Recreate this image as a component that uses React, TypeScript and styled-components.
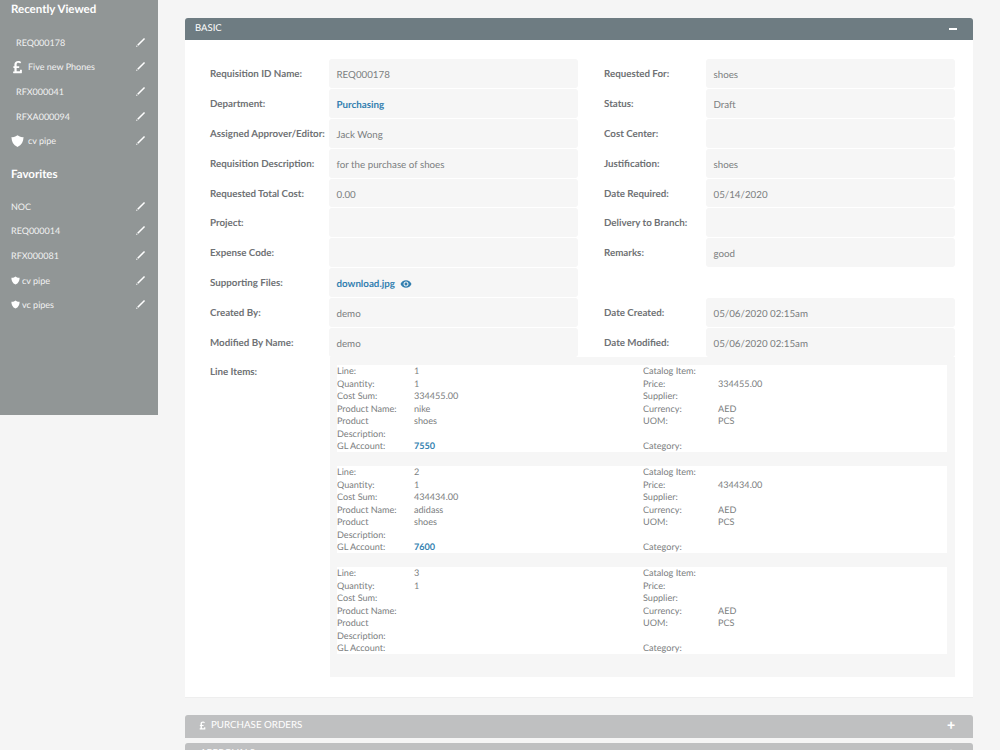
import React from 'react';
import styled, { createGlobalStyle } from 'styled-components';
import { FaPoundSign } from 'react-icons/fa';
import { MdRemoveRedEye } from 'react-icons/md';

const GlobalStyle = createGlobalStyle`
    html, body {
        margin: 0;
        height: 750px;
        overflow: hidden;
        background: #f5f5f5;
        font-family: Lato, "Liberation Sans", sans-serif;
        color: #75787b;
        text-rendering: geometricPrecision;
    }
`;

const Page = styled.div`
    display: flex;
    align-items: flex-start;
    height: 750px;
    overflow: hidden;
`;

const Sidebar = styled.aside`
    width: 158px;
    height: 415px;
    flex-shrink: 0;
    box-sizing: border-box;
    padding-top: 2px;
    background: #919696;
    color: #fff;
`;

const SideTitle = styled.h3<{ $spaced?: boolean }>`
    margin: ${({ $spaced }) => ($spaced ? '14px' : '0')} 0 ${({ $spaced }) => ($spaced ? '11px' : '12px')} 11px;
    height: 16px;
    font-size: 11.5px;
    line-height: 16px;
    font-weight: 700;
`;

const SideItem = styled.div<{ $indent?: number }>`
    display: flex;
    align-items: center;
    height: 24.6px;
    padding-left: ${({ $indent }) => $indent ?? 11}px;
    padding-right: 12px;
    font-size: 9px;
    color: #f1f2f2;
`;

const SideIcon = styled.span<{ $gap: number; $width: number }>`
    display: inline-flex;
    justify-content: center;
    width: ${({ $width }) => $width}px;
    margin-right: ${({ $gap }) => $gap}px;
    color: #fff;
`;

const SideLabel = styled.span`
    flex: 1;
`;

const Main = styled.main`
    width: 788px;
    margin-left: 27px;
    padding-top: 18px;
`;

const SectionHeader = styled.div<{ $active?: boolean }>`
    display: flex;
    align-items: center;
    box-sizing: border-box;
    height: ${({ $active }) => ($active ? '22px' : '23px')};
    padding: ${({ $active }) => ($active ? '0 16px 1px 10px' : '0 18px 3px 15px')};
    border-radius: 3px 3px 0 0;
    background: ${({ $active }) => ($active ? '#6e7c82' : '#bfc0c1')};
    color: #fff;
    font-size: ${({ $active }) => ($active ? '9.5px' : '9.75px')};
`;

const SectionTitle = styled.span`
    flex: 1;
    display: flex;
    align-items: center;
    gap: 4px;
`;

const SectionIcon = styled.span`
    display: inline-flex;
    margin-left: -2px;
`;

const Plus = styled.span`
    font-size: 14px;
    font-weight: 900;
    line-height: 1;
`;

const Minus = styled.span`
    width: 8px;
    height: 2px;
    background: #fff;
`;

const ClosedHeaders = styled.div`
    display: flex;
    flex-direction: column;
    gap: 5px;
`;

const Panel = styled.section`
    box-sizing: border-box;
    height: 658px;
    margin-bottom: 17px;
    padding: 19px 18px 0 25px;
    background: #fff;
    border-bottom: 1px solid #eeeeee;
`;

const FormGrid = styled.div`
    display: grid;
    grid-template-columns: 119px 249px 128px 249px;
    grid-auto-rows: 28.9px;
    row-gap: 1px;
`;

const Label = styled.div`
    padding-top: 9px;
    font-size: 9.75px;
    font-weight: 700;
    white-space: nowrap;
    color: #6f7275;
`;

const RightLabel = styled(Label)`
    padding-left: 26px;
`;

const Value = styled.div`
    display: flex;
    align-items: center;
    gap: 5px;
    padding: 3px 0 0 7.5px;
    border-radius: 3px;
    background: #f6f6f6;
    font-size: 9.75px;
    color: #7b7e80;
`;

const Blank = styled.div``;

const Link = styled.span`
    color: #337fb0;
    font-weight: 700;
`;

const LinesRow = styled.div`
    display: grid;
    grid-template-columns: 120px 625px;
`;

const LinesBox = styled.div`
    height: 320px;
    box-sizing: border-box;
    padding: 8px 8px 0 7px;
    background: #f6f6f6;
`;

const LineCard = styled.div`
    display: grid;
    grid-template-columns: 306px 1fr;
    height: 87.5px;
    margin-bottom: 13.5px;
    padding-top: 0.5px;
    box-sizing: border-box;
    background: #fff;
    font-size: 9.1px;
    line-height: 12.5px;
    color: #7b7e80;
`;

const LineTable = styled.div<{ $key: number }>`
    display: grid;
    grid-template-columns: ${({ $key }) => $key}px 1fr;
    align-content: start;
`;

const pencil = (
    <svg width="11" height="11" viewBox="0 0 12 12" fill="#fff">
        <path d="M9.8 1 11 2.2 3.6 9.6 2.4 8.4z" />
        <path d="M2 9 3 10 1 11z" />
    </svg>
);

const shield = (size: number) => (
    <svg width={size} height={size} viewBox="0 0 14 14" fill="#fff">
        <path d="M7 .8 9.4 2.2C10.6 2.8 12 2.9 13.4 2.8 13.4 7.6 11.6 11.4 7 13.4 2.4 11.4.6 7.6.6 2.8 2 2.9 3.4 2.8 4.6 2.2z" />
    </svg>
);

const recent = [
    { name: 'REQ000178' },
    { name: 'Five new Phones', icon: <FaPoundSign size={14} /> },
    { name: 'RFX000041' },
    { name: 'RFXA000094' },
    { name: 'cv pipe', icon: shield(14) },
];

const favorites = [
    { name: 'NOC' },
    { name: 'REQ000014' },
    { name: 'RFX000081' },
    { name: 'cv pipe', icon: shield(9) },
    { name: 'vc pipes', icon: shield(9) },
];

const lines = [
    { line: '1', qty: '1', sum: '334455.00', product: 'nike', desc: 'shoes', gl: '7550', price: '334455.00' },
    { line: '2', qty: '1', sum: '434434.00', product: 'adidass', desc: 'shoes', gl: '7600', price: '434434.00' },
    { line: '3', qty: '1', sum: '', product: '', desc: '', gl: '', price: '' },
];

const Field = ({ label, value, right }: { label: string; value?: React.ReactNode; right?: boolean }) => (
    <>
        {right ? <RightLabel>{label}</RightLabel> : <Label>{label}</Label>}
        <Value>{value}</Value>
    </>
);

const App = () => (
    <Page>
        <GlobalStyle />
        <Sidebar>
            <SideTitle>Recently Viewed</SideTitle>
            {recent.map((item) => (
                <SideItem key={item.name} $indent={item.icon ? 11 : 16}>
                    {item.icon && (
                        <SideIcon $width={13} $gap={4}>
                            {item.icon}
                        </SideIcon>
                    )}
                    <SideLabel>{item.name}</SideLabel>
                    {pencil}
                </SideItem>
            ))}
            <SideTitle $spaced>Favorites</SideTitle>
            {favorites.map((item) => (
                <SideItem key={item.name}>
                    {item.icon && (
                        <SideIcon $width={9} $gap={2}>
                            {item.icon}
                        </SideIcon>
                    )}
                    <SideLabel>{item.name}</SideLabel>
                    {pencil}
                </SideItem>
            ))}
        </Sidebar>
        <Main>
            <SectionHeader $active>
                <SectionTitle>BASIC</SectionTitle>
                <Minus />
            </SectionHeader>
            <Panel>
                <FormGrid>
                    <Field label="Requisition ID Name:" value="REQ000178" />
                    <Field right label="Requested For:" value="shoes" />
                    <Field label="Department:" value={<Link>Purchasing</Link>} />
                    <Field right label="Status:" value="Draft" />
                    <Field label="Assigned Approver/Editor:" value="Jack Wong" />
                    <Field right label="Cost Center:" />
                    <Field label="Requisition Description:" value="for the purchase of shoes" />
                    <Field right label="Justification:" value="shoes" />
                    <Field label="Requested Total Cost:" value="0.00" />
                    <Field right label="Date Required:" value="05/14/2020" />
                    <Field label="Project:" />
                    <Field right label="Delivery to Branch:" />
                    <Field label="Expense Code:" />
                    <Field right label="Remarks:" value="good" />
                    <Field
                        label="Supporting Files:"
                        value={
                            <>
                                <Link>download.jpg</Link>
                                <MdRemoveRedEye size={12} color="#337fb0" />
                            </>
                        }
                    />
                    <Blank />
                    <Blank />
                    <Field label="Created By:" value="demo" />
                    <Field right label="Date Created:" value="05/06/2020 02:15am" />
                    <Field label="Modified By Name:" value="demo" />
                    <Field right label="Date Modified:" value="05/06/2020 02:15am" />
                </FormGrid>
                <LinesRow>
                    <Label>Line Items:</Label>
                    <LinesBox>
                        {lines.map((row) => (
                            <LineCard key={row.line}>
                                <LineTable $key={77}>
                                    <span>Line:</span>
                                    <span>{row.line}</span>
                                    <span>Quantity:</span>
                                    <span>{row.qty}</span>
                                    <span>Cost Sum:</span>
                                    <span>{row.sum}</span>
                                    <span>Product Name:</span>
                                    <span>{row.product}</span>
                                    <span>
                                        Product
                                        <br />
                                        Description:
                                    </span>
                                    <span>{row.desc}</span>
                                    <span>GL Account:</span>
                                    <Link>{row.gl}</Link>
                                </LineTable>
                                <LineTable $key={75}>
                                    <span>Catalog Item:</span>
                                    <span />
                                    <span>Price:</span>
                                    <span>{row.price}</span>
                                    <span>Supplier:</span>
                                    <span />
                                    <span>Currency:</span>
                                    <span>AED</span>
                                    <span>UOM:</span>
                                    <span>PCS</span>
                                    <span>&nbsp;</span>
                                    <span />
                                    <span>Category:</span>
                                    <span />
                                </LineTable>
                            </LineCard>
                        ))}
                    </LinesBox>
                </LinesRow>
            </Panel>
            <ClosedHeaders>
                <SectionHeader>
                    <SectionTitle>
                        <SectionIcon>
                            <FaPoundSign size={9} />
                        </SectionIcon>
                        PURCHASE ORDERS
                    </SectionTitle>
                    <Plus>+</Plus>
                </SectionHeader>
                <SectionHeader>
                    <SectionTitle>APPROVALS</SectionTitle>
                    <Plus>+</Plus>
                </SectionHeader>
            </ClosedHeaders>
        </Main>
    </Page>
);

export default App;
